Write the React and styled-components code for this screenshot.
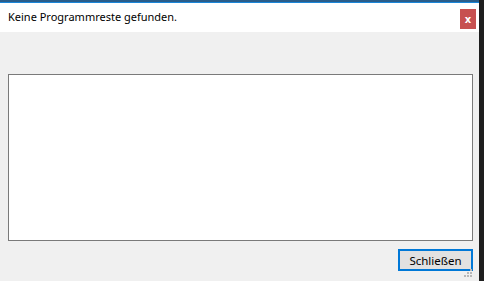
import React from 'react'
import styled, { createGlobalStyle } from 'styled-components'

const Global = createGlobalStyle`
    html, body {
        margin: 0;
        padding: 0;
        background: #1e1e1e;
    }
    #root {
        width: 484px;
        height: 281px;
        overflow: hidden;
    }
`

const Screen = styled.div`
    display: flex;
    width: 484px;
    height: 281px;
    background: #1e1e1e;
`

const Window = styled.div`
    display: flex;
    flex-direction: column;
    width: 479px;
    height: 281px;
    background: #f0f0f0;
    font-family: "Noto Sans", "Liberation Sans", sans-serif;
    font-size: 11px;
    color: #000;
`

const TopEdge = styled.div`
    height: 2px;
    background: #2a5d8a;
    border-bottom: 1px solid #1a86d9;
`

const TitleBar = styled.div`
    display: flex;
    align-items: center;
    justify-content: space-between;
    height: 29px;
    padding: 0 3px 0 8px;
    background: #fff;
`

const Title = styled.span`
    font-size: 11px;
    line-height: 16px;
    margin-top: -1px;
`

const CloseButton = styled.div`
    display: flex;
    align-items: center;
    justify-content: center;
    width: 16px;
    height: 20px;
    margin-top: 3px;
    background: #c75050;
    color: #fff;
    font-family: "DejaVu Sans", sans-serif;
    font-weight: bold;
    font-size: 10px;
`

const Body = styled.div`
    flex: 1;
    display: flex;
    flex-direction: column;
    padding: 42px 6px 0 8px;
`

const TextArea = styled.div`
    height: 165px;
    background: #fff;
    border: 1px solid #7a7a7a;
`

const Footer = styled.div`
    display: flex;
    justify-content: flex-end;
    padding-top: 8px;
`

const Button = styled.button`
    width: 75px;
    height: 22px;
    padding: 0;
    background: #e1e1e1;
    border: 2px solid #0078d7;
    font-family: "Noto Sans", "Liberation Sans", sans-serif;
    font-size: 11.5px;
    color: #000;
`

const Corner = styled.div`
    position: relative;
    flex: 1;
`

const Grip = styled.div`
    position: absolute;
    right: 0;
    bottom: 0;
`

function App() {
    return (
    <Screen>
    <Global />
    <Window>
        <TopEdge />
        <TitleBar>
            <Title>Keine Programmreste gefunden.</Title>
            <CloseButton>x</CloseButton>
        </TitleBar>
        <Body>
            <TextArea />
            <Footer>
                <Button>Schließen</Button>
            </Footer>
            <Corner>
                <Grip>
                    <svg width="10" height="10" viewBox="0 0 10 10">
                        <g fill="#b8b8b8">
                            <rect x="7" y="1" width="2" height="2" />
                            <rect x="4" y="4" width="2" height="2" />
                            <rect x="7" y="4" width="2" height="2" />
                            <rect x="1" y="7" width="2" height="2" />
                            <rect x="4" y="7" width="2" height="2" />
                            <rect x="7" y="7" width="2" height="2" />
                        </g>
                    </svg>
                </Grip>
            </Corner>
        </Body>
    </Window>
    </Screen>
    )
}

export default App
